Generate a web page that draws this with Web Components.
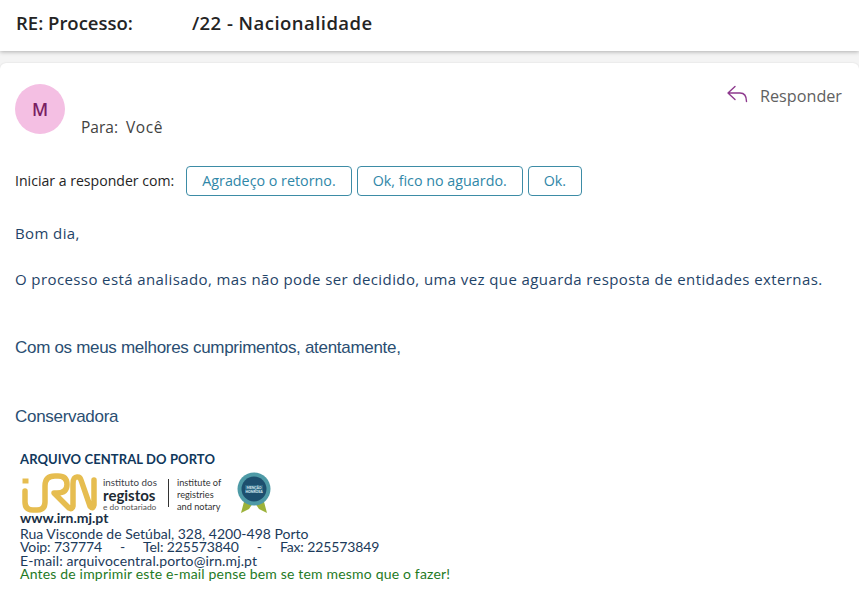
<!DOCTYPE html>
<html lang="pt">
<head>
<meta charset="utf-8">
<title>RE: Processo</title>
<style>
    html, body { margin: 0; padding: 0; background: #f4f4f4; }
    body { width: 859px; height: 589px; overflow: hidden; font-family: "Open Sans", "Noto Sans", sans-serif; }
</style>
</head>
<body>
<mail-subject>RE: Processo:<span style="display:inline-block;width:59px"></span><span style="letter-spacing:.46px">/22 - Nacionalidade</span></mail-subject>
<mail-card>
    <mail-head initial="M" slot="head"></mail-head>
    <quick-replies slot="replies" label="Iniciar a responder com:">
        <reply-chip>Agradeço o retorno.</reply-chip>
        <reply-chip>Ok, fico no aguardo.</reply-chip>
        <reply-chip>Ok.</reply-chip>
    </quick-replies>
    <mail-body slot="body"></mail-body>
    <mail-signature slot="signature"></mail-signature>
</mail-card>

<script>
class MailSubject extends HTMLElement {
    constructor()
    {
        super();
        this.attachShadow({mode: 'open'}).innerHTML = `
            <style>
                :host { display: block; height: 51px; box-sizing: border-box; padding: 11px 16px 0; background: #fff;
                    box-shadow: 0 1px 4px rgba(0,0,0,.28); position: relative;
                    font: 600 18.5px/24px "Open Sans", sans-serif; color: #242424; white-space: nowrap; }
            </style>
            <slot></slot>`;
    }
}

class MailCard extends HTMLElement {
    constructor()
    {
        super();
        this.attachShadow({mode: 'open'}).innerHTML = `
            <style>
                :host { display: block; margin-top: 12px; height: 526px; box-sizing: border-box; background: #fff;
                    border-radius: 6px 6px 0 0; box-shadow: 0 0 2px rgba(0,0,0,.12); }
            </style>
            <slot name="head"></slot>
            <slot name="replies"></slot>
            <slot name="body"></slot>
            <slot name="signature"></slot>`;
    }
}

class MailHead extends HTMLElement {
    constructor()
    {
        super();
        this.attachShadow({mode: 'open'}).innerHTML = `
            <style>
                :host { display: flex; height: 103px; box-sizing: border-box; padding: 21px 17px 0 15px; }
                .avatar { width: 50px; height: 50px; border-radius: 50%; background: #f4bfe3; color: #7a1f63;
                    display: flex; align-items: center; justify-content: center; font-size: 17.5px; font-weight: 600; }
                .to { margin: 32px 0 0 16px; font-size: 15.5px; line-height: 22px; color: #424242; flex: 1; }
                .to span { margin-left: 4px; letter-spacing: .6px; }
                .reply { display: flex; gap: 12px; align-items: flex-start; color: #616161; font-size: 16.2px; line-height: 24px; }
                svg { display: block; margin-top: 1px; overflow: visible; }
            </style>
            <div class="avatar"></div>
            <div class="to">Para: <span>Você</span></div>
            <div class="reply">
                <svg width="22" height="18" viewBox="0 0 22 18" fill="none" stroke="#8e3a8e" stroke-width="1.4" stroke-linecap="round" stroke-linejoin="round">
                    <path d="M9 1.500 2 8l7 6.500M2 8H14c4 0 6.500 3 6.500 8.500"/>
                </svg>
                <span>Responder</span>
            </div>`;
    }

    connectedCallback()
    {
        this.shadowRoot.querySelector('.avatar').textContent = this.getAttribute('initial');
    }
}

class QuickReplies extends HTMLElement {
    constructor()
    {
        super();
        this.attachShadow({mode: 'open'}).innerHTML = `
            <style>
                :host { display: flex; align-items: center; height: 30px; padding-left: 15px; gap: 5px; }
                .label { font-size: 14.1px; color: #242424; margin-right: 7px; white-space: nowrap; position: relative; top: -1px; }
            </style>
            <span class="label"></span>
            <slot></slot>`;
    }

    connectedCallback()
    {
        this.shadowRoot.querySelector('.label').textContent = this.getAttribute('label');
    }
}

class ReplyChip extends HTMLElement {
    constructor()
    {
        super();
        this.attachShadow({mode: 'open'}).innerHTML = `
            <style>
                :host { display: flex; align-items: center; height: 30px; box-sizing: border-box; padding: 0 15px 2px;
                    border: 1px solid #3d8ca6; border-radius: 4px; font-size: 14.3px; color: #2f87a8; white-space: nowrap; }
            </style>
            <slot></slot>`;
    }
}

class MailBody extends HTMLElement {
    constructor()
    {
        super();
        this.attachShadow({mode: 'open'}).innerHTML = `
            <style>
                :host { display: block; padding: 26px 15px 0; color: #1f4468; font-size: 15px; letter-spacing: .4px; }
                p { margin: 0; line-height: 22px; white-space: nowrap; }
                .gap { margin-top: 24px; }
                .sig { font: 17px/24px "Liberation Sans", sans-serif; letter-spacing: -.3px; color: #2a4e72; }
                .first { margin-top: 46px; }
                .second { margin-top: 45px; }
            </style>
            <p>Bom dia,</p>
            <p class="gap">O processo está analisado, mas não pode ser decidido, uma vez que aguarda resposta de entidades externas.</p>
            <p class="sig first">Com os meus melhores cumprimentos, atentamente,</p>
            <p class="sig second">Conservadora</p>`;
    }
}

class IrnLogo extends HTMLElement {
    constructor()
    {
        super();
        this.attachShadow({mode: 'open'}).innerHTML = `
            <style>
                :host { display: flex; align-items: flex-start; height: 40px; }
                svg { display: block; flex: none; overflow: visible; }
                .pt { margin-left: 5px; padding-top: 5px; color: #3c4248; width: 56px; font-size: 9.8px; line-height: 10px; white-space: nowrap; }
                .pt b { display: block; font-size: 15px; line-height: 16px; font-weight: 700; color: #1d2a33; }
                .pt small { display: block; font-size: 8.400px; line-height: 9px; color: #555; }
                .rule { width: 1px; height: 28px; background: #333; margin: 7px 8px 0 9px; }
                .en { padding-top: 5px; font-size: 9.200px; line-height: 12px; color: #333; width: 50px; white-space: nowrap; }
                .badge { margin-left: 9px; }
            </style>
            <svg width="78" height="42" viewBox="0 0 78 42" fill="none" stroke="#e6bd50" stroke-width="5.500" stroke-linecap="round" stroke-linejoin="round">
                <path d="M5 9h1" stroke-linecap="square" stroke-width="5"/>
                <path d="M5 19v11q0 8 8 8h4q8 0 8-8V14q0-10 10-10h3q9 0 9 8.500t-10 8.500h-3l15 15q3 2 4-2V12q0-8 5-7 2 0 3 3l9 26q3 4 4-1V8"/>
            </svg>
            <div class="pt">instituto dos<b>registos</b><small>e do notariado</small></div>
            <div class="rule"></div>
            <div class="en">institute of<br>registries<br>and notary</div>
            <svg class="badge" width="36" height="42" viewBox="0 0 36 42">
                <path d="M9 26 5 41l8-4 6-9zM27 26l4 15-8-4-6-9z" fill="#9cb23a"/>
                <circle cx="18" cy="17" r="16.500" fill="#4e9aa6"/>
                <circle cx="18" cy="17" r="12.500" fill="#1d4f6e"/>
                <rect x="9" y="13" width="18" height="8" fill="#2d6a86"/>
                <text x="18" y="16.500" font-size="3.400" font-weight="700" fill="#dfe9ee" text-anchor="middle">MENÇÃO</text>
                <text x="18" y="20.500" font-size="3.400" font-weight="700" fill="#dfe9ee" text-anchor="middle">HONROSA</text>
            </svg>`;
    }
}

class MailSignature extends HTMLElement {
    constructor()
    {
        super();
        this.attachShadow({mode: 'open'}).innerHTML = `
            <style>
                :host { display: block; margin-top: 22px; padding-left: 20px; color: #1b3a5a; font: 14px/13.5px Lato, sans-serif; }
                h4 { margin: 0 0 5px; font: 700 13px/16px Lato, sans-serif; letter-spacing: .1px; color: #10385c; }
                .web { font-weight: 700; line-height: 12px; color: #1a2f45; margin-bottom: 2.500px; }
                .line { white-space: nowrap; }
                .voip { display: flex; gap: 18px; letter-spacing: -.12px; }
                .mail { letter-spacing: .12px; }
                .green { color: #1f7a1f; letter-spacing: .18px; }
            </style>
            <h4>ARQUIVO CENTRAL DO PORTO</h4>
            <irn-logo></irn-logo>
            <div class="web">www.irn.mj.pt</div>
            <div class="line">Rua Visconde de Setúbal, 328, 4200-498 Porto</div>
            <div class="line voip"><span>Voip: 737774</span><span>-</span><span>Tel: 225573840</span><span>-</span><span>Fax: 225573849</span></div>
            <div class="line mail">E-mail: arquivocentral.porto@irn.mj.pt</div>
            <div class="line green">Antes de imprimir este e-mail pense bem se tem mesmo que o fazer!</div>`;
    }
}

customElements.define('mail-subject', MailSubject);
customElements.define('mail-card', MailCard);
customElements.define('mail-head', MailHead);
customElements.define('quick-replies', QuickReplies);
customElements.define('reply-chip', ReplyChip);
customElements.define('mail-body', MailBody);
customElements.define('irn-logo', IrnLogo);
customElements.define('mail-signature', MailSignature);
</script>
</body>
</html>
